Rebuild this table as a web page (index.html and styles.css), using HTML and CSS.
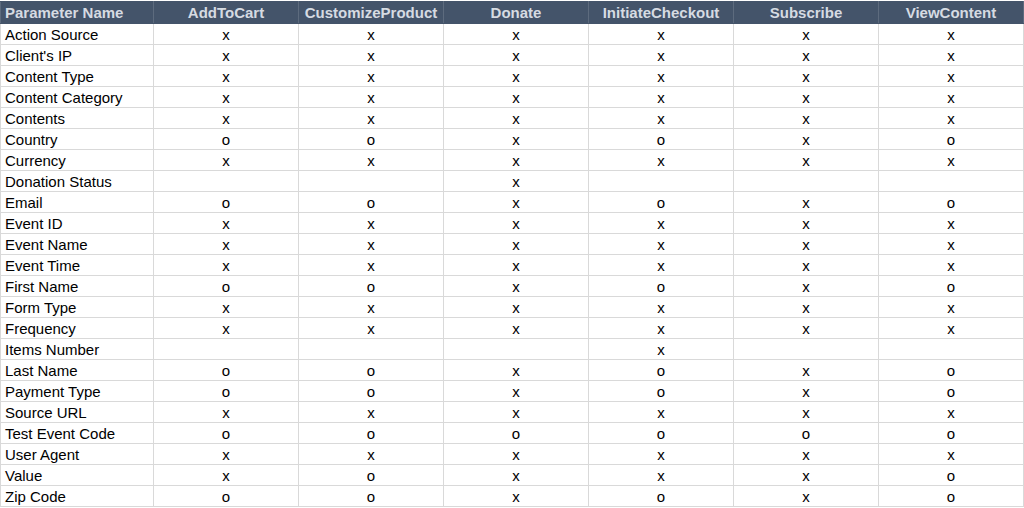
FILE: index.html
```html
<!DOCTYPE html>
<html>
<head>
<meta charset="utf-8">
<link rel="stylesheet" href="styles.css">
</head>
<body>
<table class="grid">
  <colgroup>
    <col class="c-name">
    <col class="c-ev"><col class="c-ev"><col class="c-ev"><col class="c-ev"><col class="c-ev"><col class="c-ev">
  </colgroup>
  <thead>
    <tr>
      <th class="left">Parameter Name</th>
      <th>AddToCart</th>
      <th>CustomizeProduct</th>
      <th>Donate</th>
      <th>InitiateCheckout</th>
      <th>Subscribe</th>
      <th>ViewContent</th>
    </tr>
  </thead>
  <tbody>
    <tr><td class="left">Action Source</td><td>x</td><td>x</td><td>x</td><td>x</td><td>x</td><td>x</td></tr>
    <tr><td class="left">Client's IP</td><td>x</td><td>x</td><td>x</td><td>x</td><td>x</td><td>x</td></tr>
    <tr><td class="left">Content Type</td><td>x</td><td>x</td><td>x</td><td>x</td><td>x</td><td>x</td></tr>
    <tr><td class="left">Content Category</td><td>x</td><td>x</td><td>x</td><td>x</td><td>x</td><td>x</td></tr>
    <tr><td class="left">Contents</td><td>x</td><td>x</td><td>x</td><td>x</td><td>x</td><td>x</td></tr>
    <tr><td class="left">Country</td><td>o</td><td>o</td><td>x</td><td>o</td><td>x</td><td>o</td></tr>
    <tr><td class="left">Currency</td><td>x</td><td>x</td><td>x</td><td>x</td><td>x</td><td>x</td></tr>
    <tr><td class="left">Donation Status</td><td></td><td></td><td>x</td><td></td><td></td><td></td></tr>
    <tr><td class="left">Email</td><td>o</td><td>o</td><td>x</td><td>o</td><td>x</td><td>o</td></tr>
    <tr><td class="left">Event ID</td><td>x</td><td>x</td><td>x</td><td>x</td><td>x</td><td>x</td></tr>
    <tr><td class="left">Event Name</td><td>x</td><td>x</td><td>x</td><td>x</td><td>x</td><td>x</td></tr>
    <tr><td class="left">Event Time</td><td>x</td><td>x</td><td>x</td><td>x</td><td>x</td><td>x</td></tr>
    <tr><td class="left">First Name</td><td>o</td><td>o</td><td>x</td><td>o</td><td>x</td><td>o</td></tr>
    <tr><td class="left">Form Type</td><td>x</td><td>x</td><td>x</td><td>x</td><td>x</td><td>x</td></tr>
    <tr><td class="left">Frequency</td><td>x</td><td>x</td><td>x</td><td>x</td><td>x</td><td>x</td></tr>
    <tr><td class="left">Items Number</td><td></td><td></td><td></td><td>x</td><td></td><td></td></tr>
    <tr><td class="left">Last Name</td><td>o</td><td>o</td><td>x</td><td>o</td><td>x</td><td>o</td></tr>
    <tr><td class="left">Payment Type</td><td>o</td><td>o</td><td>x</td><td>o</td><td>x</td><td>o</td></tr>
    <tr><td class="left">Source URL</td><td>x</td><td>x</td><td>x</td><td>x</td><td>x</td><td>x</td></tr>
    <tr><td class="left">Test Event Code</td><td>o</td><td>o</td><td>o</td><td>o</td><td>o</td><td>o</td></tr>
    <tr><td class="left">User Agent</td><td>x</td><td>x</td><td>x</td><td>x</td><td>x</td><td>x</td></tr>
    <tr><td class="left">Value</td><td>x</td><td>o</td><td>x</td><td>x</td><td>x</td><td>o</td></tr>
    <tr><td class="left">Zip Code</td><td>o</td><td>o</td><td>x</td><td>o</td><td>x</td><td>o</td></tr>
  </tbody>
</table>
</body>
</html>
```
FILE: styles.css
```css
html, body {
  margin: 0;
  padding: 0;
  background: #ffffff;
}
body {
  padding-top: 1px;
  font-family: "Liberation Sans", Arial, sans-serif;
  font-size: 15px;
  color: #000000;
}
.grid {
  border-collapse: collapse;
  table-layout: fixed;
  width: 1023px;
}
.c-name { width: 153px; }
.c-ev { width: 145px; }
.grid th,
.grid td {
  padding: 0;
  text-align: center;
  vertical-align: middle;
  white-space: nowrap;
  overflow: hidden;
}
.grid th {
  height: 21px;
  background: #44546a;
  color: #d6dbe2;
  font-weight: bold;
  border: 1px solid #44546a;
  border-left-color: #5d6b7e;
  border-right-color: #5d6b7e;
  line-height: 20px;
}
.grid td {
  height: 18px;
  line-height: 18px;
  padding-top: 2px;
  border: 1px solid #d9d9d9;
}
.grid .left {
  text-align: left;
  padding-left: 4px;
}
```
